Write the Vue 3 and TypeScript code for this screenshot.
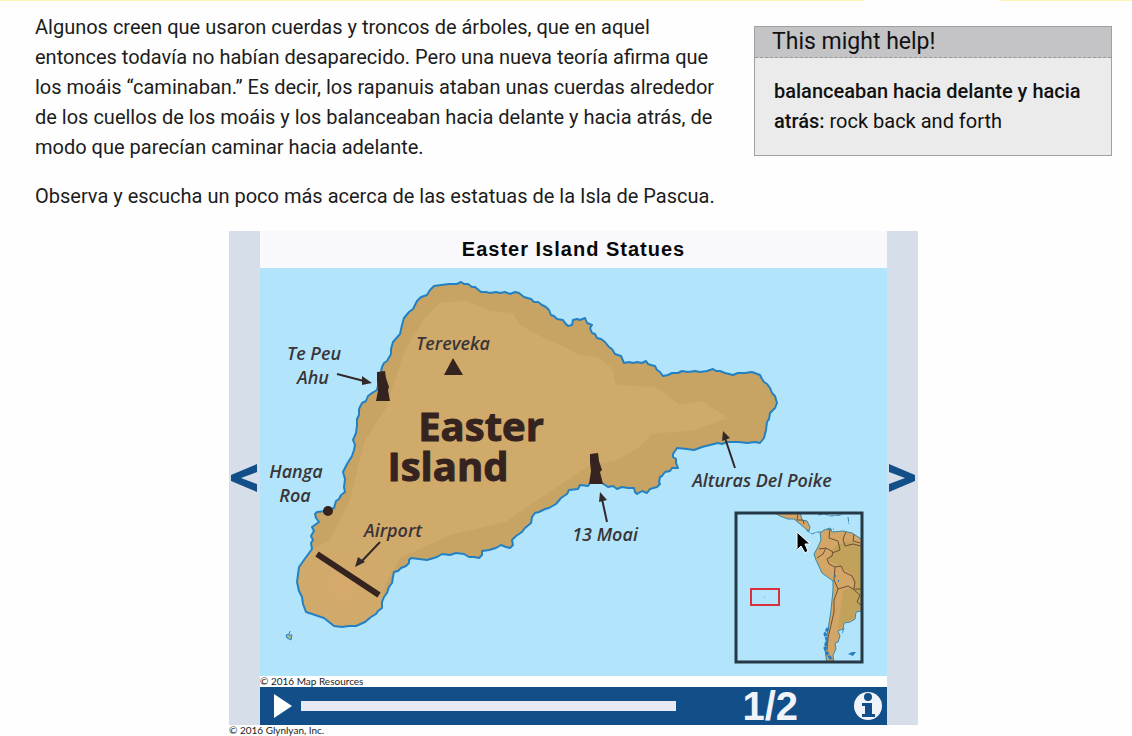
<script setup lang="ts">
import { ref } from 'vue'

interface Label {
  text: string
  x: number
  y: number
}

const labels: Label[] = [
  { text: 'Tereveka', x: 453, y: 350 },
  { text: 'Te Peu', x: 314, y: 360 },
  { text: 'Ahu', x: 313, y: 384 },
  { text: 'Hanga', x: 296, y: 478 },
  { text: 'Roa', x: 295, y: 502 },
  { text: 'Airport', x: 393, y: 537 },
  { text: '13 Moai', x: 605, y: 541 },
  { text: 'Alturas Del Poike', x: 762, y: 487 },
]

const coast =
  'M461 282L464 284L468 284L472 287L475 287L481 292L486 292L490 293L496 292L500 293L505 292L510 294L515 292L519 293L524 297L531 299L534 302L538 302L542 305L546 307L549 310L551 315L554 316L557 319L563 320L565 323L568 326L572 325L573 320L577 319L580 320L585 318L587 323L592 325L590 328L592 333L595 334L597 338L601 339L605 342L609 347L612 349L615 354L621 356L624 363L629 362L633 363L637 362L642 363L646 361L648 364L651 365L655 366L657 370L660 372L663 376L668 375L672 373L678 373L682 371L688 372L695 371L700 372L707 371L713 369L716 371L720 371L725 373L733 375L738 373L745 373L752 372L760 375L762 379L764 382L767 384L770 388L772 393L775 396L777 403L775 408L770 413L769 419L767 422L766 430L764 438L760 443L755 442L747 443L739 442L727 442L722 444L718 443L710 445L702 447L694 450L687 449L677 448L673 454L673 457L676 459L676 463L678 468L672 468L670 471L665 472L662 476L660 477L659 482L660 484L657 487L650 489L647 493L642 491L637 494L635 492L634 488L628 488L622 487L617 489L613 486L608 487L602 483L590 483L588 486L580 485L578 489L569 490L567 494L561 498L556 504L549 508L545 509L539 512L535 513L532 517L531 523L525 528L522 532L516 536L512 540L513 545L510 548L506 547L501 545L496 548L489 550L482 551L482 555L479 558L474 557L469 557L464 554L456 553L450 555L442 554L437 557L427 560L419 559L411 558L409 560L409 563L406 566L401 568L398 571L394 572L393 577L392 583L389 587L387 593L384 597L382 602L382 608L378 611L376 614L371 617L365 622L356 626L349 626L342 627L334 626L324 618L315 615L306 612L303 604L302 597L299 591L297 582L299 567L304 560L312 549L311 543L313 540L311 536L314 531L312 527L319 522L316 518L315 514L317 512L326 511L334 508L336 501L339 499L341 495L345 492L344 487L345 479L343 472L347 464L352 456L354 450L355 445L353 440L356 433L357 425L357 419L359 415L359 409L362 403L366 401L368 396L372 393L377 390L380 377L382 367L384 363L387 361L391 354L391 349L393 342L400 334L402 325L404 318L409 312L413 309L417 301L421 297L427 295L430 290L434 286L441 285L449 284L457 284Z'

const playing = ref(false)
const position = ref(0)
const slide = ref(1)
const slideCount = 2

function step(delta: number): void {
  slide.value = Math.min(slideCount, Math.max(1, slide.value + delta))
}
</script>

<template>
  <div class="page">
    <div class="stripe"><span></span><span></span></div>
    <main class="content">
      <section class="intro">
        <div class="story">
          <p>
            Algunos creen que usaron cuerdas y troncos de árboles, que en aquel<br />
            entonces todavía no habían desaparecido. Pero una nueva teoría afirma que<br />
            los moáis “caminaban.” Es decir, los rapanuis ataban unas cuerdas alrededor<br />
            de los cuellos de los moáis y los balanceaban hacia delante y hacia atrás, de<br />
            modo que parecían caminar hacia adelante.
          </p>
          <p>Observa y escucha un poco más acerca de las estatuas de la Isla de Pascua.</p>
        </div>
        <aside class="help">
          <h2>This might help!</h2>
          <p><b>balanceaban hacia delante y hacia<br />atrás:</b> rock back and forth</p>
        </aside>
      </section>

      <figure class="media">
        <div class="player">
          <button class="nav" type="button" aria-label="Previous" @click="step(-1)">
            <svg viewBox="0 0 28 28"><path d="M27 0V8L11 14L27 20V28L1 17V11Z" /></svg>
          </button>
          <div class="stage">
            <h1>Easter Island Statues</h1>
            <svg class="map" viewBox="260 268 627 408" role="img" aria-label="Map of Easter Island">
              <defs>
                <clipPath id="land"><path :d="coast" /></clipPath>
                <clipPath id="inset"><rect x="737" y="514" width="124" height="147" /></clipPath>
                <radialGradient id="lowland">
                  <stop offset="0" stop-color="#d8a96c" />
                  <stop offset="1" stop-color="#d0aa6b" stop-opacity="0" />
                </radialGradient>
              </defs>
              <rect x="260" y="268" width="627" height="408" fill="#b2e5fb" />
              <path :d="coast" fill="#c8a464" />
              <g clip-path="url(#land)">
                <path fill="#d0aa6b" d="M425 318L440 303L467 301L490 311L513 313L520 325L540 336L560 345L580 355L598 357L612 369L616 385L655 387L680 405L702 401L728 418L695 430L652 434L638 448L615 461L590 465L560 485L505 522L450 535L400 558L385 585L378 640L290 640L290 560L330 540L350 500L365 440L385 410L405 350Z" />
                <ellipse cx="343" cy="585" rx="44" ry="42" fill="url(#lowland)" />
              </g>
              <path :d="coast" fill="none" stroke="#2380c2" stroke-width="2" stroke-linejoin="round" />
              <path d="M290 631L289 634L286 635L287 638L291 640L292 635L289 635" fill="#9fb79a" stroke="#2f83bd" stroke-width="1" />

              <g fill="#35231f">
                <path d="M453 358L463 375H444Z" />
                <path d="M377 372L385 371L386 378L389 387L388 390L390 401H376L378 391L377 381Z" />
                <path d="M590 454L598 453L599 461L602 470L600 472L603 484H589L591 471L590 462Z" />
                <circle cx="328" cy="511" r="5" />
              </g>
              <path d="M317 554L379 595" stroke="#35231f" stroke-width="6" />
              <g stroke="#35282a" stroke-width="2" fill="#35282a">
                <path d="M337 374L364 381M380 542L361 562M607 522L602 499M735 468L725 438" />
                <path stroke="none" d="M372 383L362 376V385ZM355 567L358 557L365 562ZM600 492L599 502L607 500ZM723 431L722 441L730 438Z" />
              </g>
              <g class="labels">
                <text v-for="label in labels" :key="label.text" :x="label.x" :y="label.y">{{ label.text }}</text>
              </g>
              <g class="island-name">
                <text x="481" y="441">Easter</text>
                <text x="448" y="481">Island</text>
              </g>

              <g clip-path="url(#inset)">
                <g fill="#d3a566" stroke="#3b87a6" stroke-width="1">
                  <path d="M773 512L780 516L788 519L794 519L800 524L806 529L809 531L810 527L807 521L802 520L800 512Z" />
                  <path d="M820 533L824 530L830 528L832 532L843 531L852 533L866 542V610L856 612L855 619L850 622L844 623L843 629L838 631L840 636L838 642L835 643L836 649L833 655L834 664H827L825 650L828 630L831 610L833 590L833 581L822 573L816 560L814 554L818 547L821 540Z" />
                </g>
                <path fill="#c2a15a" d="M836 545L850 541L864 548V608L856 611L853 619L843 623L838 631L841 608L843 590L855 586L850 573L838 565L828 561L831 552Z" />
                <path d="M830 529L829 538L838 541L840 550L832 553M846 532L843 539L845 546L853 544L861 546M854 534L853 541L860 543M819 549L826 548L833 552L832 556L827 559L829 564L835 567L841 566L844 572L852 576L855 582L854 588M835 567L834 580L838 589L848 586L853 589L861 589M853 589L860 595L857 602L861 605M838 589L834 600L834 612L831 625L828 638L827 650M817 558L823 554L826 548M798 514L797 520L803 520L804 524" fill="none" stroke="#6b5135" stroke-width="1" />
                <path d="M828 628L825 634L827 640L825 648L828 655L832 660" fill="none" stroke="#277fc1" stroke-width="3" stroke-dasharray="4 1" />
                <path d="M806 530L812 534L817 532L822 532M818 515L825 514L830 516L842 515M848 517L849 524M844 628L842 634M827 530L834 529" fill="none" stroke="#3b87b6" stroke-width="1" stroke-dasharray="5 1" />
                <path d="M848 654L852 652L856 652L853 656Z" fill="#277fc1" />
                <path d="M834 576h2M838 581h1M796 549h1" stroke="#277fc1" stroke-width="2" />
              </g>
              <rect x="736" y="513" width="126" height="149" fill="none" stroke="#253846" stroke-width="3" />
              <rect x="751" y="589" width="28" height="16" fill="none" stroke="#d9303e" stroke-width="2" />
              <path d="M764 597h1" stroke="#77aabb" />
              <path d="M797 532V550L801 546L805 553L808 551L805 544H810Z" fill="#000" stroke="#fff" stroke-width="1" />
            </svg>
            <small class="credit">© 2016 Map Resources</small>
            <div class="controls">
              <button class="play" type="button" :aria-label="playing ? 'Pause' : 'Play'" @click="playing = !playing">
                <svg viewBox="0 0 18 24"><path d="M0 0L18 12L0 24Z" /></svg>
              </button>
              <input v-model.number="position" class="seek" type="range" min="0" max="100" aria-label="Position" />
              <output class="counter">{{ slide }}/{{ slideCount }}</output>
              <button class="info" type="button" aria-label="Information">
                <svg viewBox="0 0 30 30">
                  <circle cx="15" cy="15" r="14" fill="#f1f3fb" />
                  <circle cx="15" cy="6" r="4" fill="#124f88" />
                  <path d="M9 12H19V23H22V26H9V23H12V15H9Z" fill="#124f88" />
                </svg>
              </button>
            </div>
          </div>
          <button class="nav" type="button" aria-label="Next" @click="step(1)">
            <svg viewBox="0 0 28 28"><path d="M1 0V8L17 14L1 20V28L27 17V11Z" /></svg>
          </button>
        </div>
        <figcaption>© 2016 Glynlyan, Inc.</figcaption>
      </figure>
    </main>
  </div>
</template>

<style>
body {
  margin: 0;
  background: #fefefe;
  overflow: hidden;
}
</style>

<style scoped>
.page {
  color: #1c1c1c;
  font: 20px/30px Roboto, Lato, sans-serif;
}
.stripe {
  display: grid;
  grid-template-columns: 864fr 132fr;
  gap: 136px;
  height: 1px;
}
.stripe span {
  background: #fff3b8;
}
.content {
  padding: 11px 20px 0 35px;
}
.intro {
  display: flex;
  justify-content: space-between;
  align-items: flex-start;
  padding-bottom: 1px;
}
.story {
  white-space: nowrap;
}
.story p {
  margin: 0 0 19px;
}
.help {
  box-sizing: border-box;
  width: 358px;
  margin-top: 14px;
  border: 1px solid #a0a0a2;
  background: #ebebeb;
  color: #111;
}
.help h2 {
  margin: 0;
  padding: 0 17px;
  border-bottom: 1px dashed #999;
  background: #c4c4c6;
  font-size: 23px;
  font-weight: 400;
  line-height: 30px;
}
.help p {
  margin: 0;
  padding: 18px 19px 19px;
}
.help b {
  font-weight: 500;
}
.media {
  max-width: 689px;
  margin: 0 auto;
}
.player {
  display: flex;
  background: #d6deea;
}
.nav {
  flex: none;
  width: 31px;
  padding: 0 1px;
  border: 0;
  background: none;
  cursor: pointer;
}
.nav svg {
  display: block;
  width: 28px;
  fill: #124f88;
}
.stage {
  flex: 1;
  min-width: 0;
  background: #fff;
}
.stage h1 {
  margin: 0;
  background: #f9f8fc;
  color: #080808;
  font: bold 20px/37px "Liberation Sans", Arial, sans-serif;
  letter-spacing: 1px;
  text-align: center;
}
.map {
  display: block;
  width: 100%;
}
.labels {
  fill: #3a3538;
  font: italic 600 18px "Open Sans", sans-serif;
  text-anchor: middle;
}
.island-name {
  fill: #35231f;
  stroke: #35231f;
  stroke-width: 1px;
  font: bold 40px "Open Sans", sans-serif;
  text-anchor: middle;
}
.credit,
figcaption {
  display: block;
  font-family: Lato, sans-serif;
  font-size: 10px;
  line-height: 11px;
}
.controls {
  display: flex;
  align-items: center;
  height: 38px;
  padding: 0 4px 0 14px;
  background: #124f88;
}
.play,
.info {
  flex: none;
  padding: 0;
  border: 0;
  background: none;
  cursor: pointer;
}
.play svg {
  display: block;
  width: 18px;
  fill: #fff;
}
.info svg {
  display: block;
  width: 30px;
}
.seek {
  flex: 1;
  min-width: 0;
  height: 10px;
  margin: 0 66px 0 9px;
  appearance: none;
  background: #e7e9f4;
}
.seek::-webkit-slider-thumb {
  width: 10px;
  height: 10px;
  appearance: none;
  background: #e7e9f4;
}
.counter {
  margin-right: 55px;
  color: #f1f3fb;
  font: bold 40px/38px "Liberation Sans", Arial, sans-serif;
}
</style>
